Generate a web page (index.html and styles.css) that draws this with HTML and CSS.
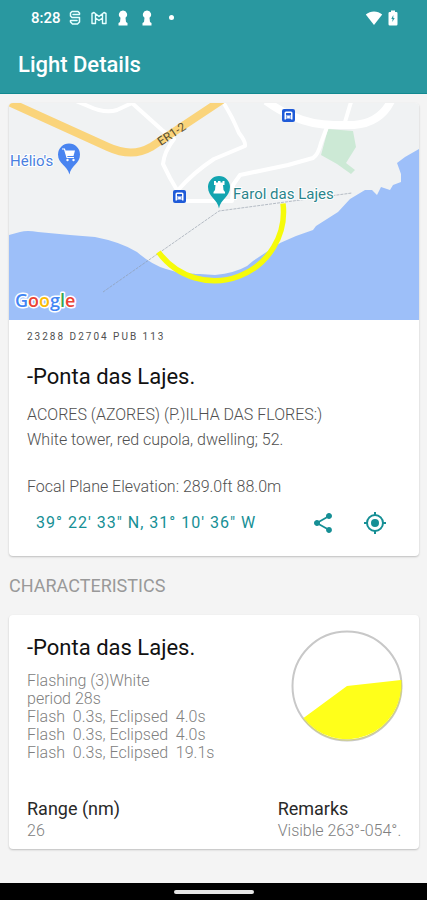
FILE: index.html
```html
<!DOCTYPE html>
<html lang="en">
<head>
<meta charset="utf-8">
<meta name="viewport" content="width=device-width, initial-scale=1">
<title>Light Details</title>
<link rel="stylesheet" href="styles.css">
</head>
<body>
<header class="top">
  <div class="status">
    <span class="clock">8:28</span>
    <svg class="s-icon" width="12" height="16" viewBox="0 0 12 16" fill="none" stroke="#e6ffff" stroke-width="1.500" stroke-linecap="round" stroke-linejoin="round"><path d="M10.500 4V3L9 1.500H3L1.500 3V6L3 7.500H10.500V12L8.500 14H3.500L1.500 12V10.500H8M4 4.500H10.500"/></svg>
    <svg class="m-icon" width="16" height="14" viewBox="0 0 16 14" fill="none" stroke="#e6ffff" stroke-width="1.400" stroke-linejoin="round"><path d="M1 2.500L3 1.500L8 5.500L13 1.500L15 2.500V12.500H11.500V7L8 9.500L4.500 7V12.500H1ZM4.500 7V3M11.500 7V3"/></svg>
    <svg class="pawn" width="10" height="16" viewBox="0 0 10 16" fill="#fff"><path d="M5 .5A4 4 0 0 1 7.500 7.700L8 12L9.500 13V15.500H.5V13L2 12L2.500 7.700A4 4 0 0 1 5 .5Z"/></svg>
    <svg class="pawn" width="10" height="16" viewBox="0 0 10 16" fill="#fff"><path d="M5 .5A4 4 0 0 1 7.500 7.700L8 12L9.500 13V15.500H.5V13L2 12L2.500 7.700A4 4 0 0 1 5 .5Z"/></svg>
    <span class="dot"></span>
    <svg class="wifi" width="18" height="16" viewBox="0 0 18 16" fill="#fff"><path d="M.8 4.500C5.500.4 12.500.4 17.200 4.500L9 15Z"/></svg>
    <svg class="battery" width="10" height="16" viewBox="0 0 10 16"><path fill="#fff" d="M3 .5H7V2H8.300Q9.500 2 9.500 3.200V14.300Q9.500 15.500 8.300 15.500H1.700Q.5 15.500.5 14.300V3.200Q.5 2 1.700 2H3Z"/><path fill="#2998a0" d="M5.300 5L3.300 9H4.600L4.300 12L6.700 8H5.300Z"/></svg>
  </div>
  <h1 class="title">Light Details</h1>
</header>

<main class="content">
  <section class="card">
    <svg class="map" viewBox="9 103 410 217" role="img" aria-label="Map">
      <rect x="9" y="103" width="410" height="217" fill="#f0f2f3"/>
      <path fill="#cce9d5" d="M328 129L353 131L356 147L346 163L355 170L351 174L337 164L321 155Z"/>
      <path fill="#9dbff9" d="M9 235L20 232Q27 230 38 232L70 235L95 237Q121 242 137 252Q152 265 166 269L180 273L200 274L215 275Q235 273 247 266L253 261L280 243L296 236L313 230L316 226L338 212L350 199L365 190L372 190L377 195L381 187L390 190L393 185L401 182L401 174L397 163L405 157L419 149V320H9Z"/>
      <path fill="#f0f2f3" d="M195 274Q228 274 249 263L284 238L270 220L190 230Z"/>
      <g fill="none" stroke="#fff" stroke-width="4" stroke-linejoin="round">
        <path d="M76 101L88 106Q105 114 117 110L132 103L162 130L174 139Q164 152 163 164L170 178L177 190"/>
        <path d="M178 190Q194 172 214 159Q226 154 245 146Q246 142 239 133Q232 116 223 102"/>
        <path d="M184 201H232L233 185L240 175L288 165L313 158Q318 155 321 143L327 127"/>
        <path d="M345 122L351 102"/>
      </g>
      <path fill="none" stroke="#fff" stroke-width="8" d="M266 101Q280 111 292 116Q312 125 334 125H354Q380 123 391 101"/>
      <path fill="none" stroke="#fad47b" stroke-width="8" d="M9 102L108 147Q132 158 151 147L222 100"/>
      <path fill="none" stroke="#8d97a5" stroke-width="1" stroke-dasharray="3 1" opacity=".6" d="M103 292L219 211L352 193"/>
      <path fill="none" stroke="#f6fb09" stroke-width="5.500" d="M158.500 252A69 69 0 0 0 283 203.500"/>
      <text class="road" transform="translate(161 146) rotate(-34)">ER1-2</text>
      <g id="bus"><rect x="173" y="190" width="13" height="13" rx="2" fill="#1f5bd8"/><path fill="#fff" d="M177 192.500H182Q183.500 192.500 183.500 194V200.500H182V199.500H177V200.500H175.500V194Q175.500 192.500 177 192.500Z"/><path fill="#1f5bd8" d="M177 194H182V196.500H177ZM177 197.500H178.200V198.500H177ZM180.800 197.500H182V198.500H180.800Z"/></g>
      <use href="#bus" x="109" y="-81"/>
      <path fill="#4984f0" d="M69 143.500A11 11 0 0 1 80 154.500C80 164 71 165 69.500 174.500C67 165 58 164 58 154.500A11 11 0 0 1 69 143.500Z"/>
      <path fill="none" stroke="#fff" stroke-width="1.200" d="M62 149H64.500L67 157.500H74"/><path fill="#fff" d="M65 150.500H75L73.500 156H66.500Z"/><circle cx="67.500" cy="160" r="1.200" fill="#fff"/><circle cx="73.500" cy="160" r="1.200" fill="#fff"/>
      <path fill="#12a4b0" d="M219 176A11 11 0 0 1 230 187C230 197 220.500 199 219 208.500C217.500 199 208 197 208 187A11 11 0 0 1 219 176Z"/>
      <path fill="#fff" d="M214 181H216V182.500H218V181H220.500V182.500H222.500V181H224.500V185H223L223.500 190L225 192V193.500H213.500V192L215 190L215.500 185H214Z"/>
      <text class="place helio" x="10" y="166">Hélio's</text>
      <text class="place farol" x="233" y="199">Farol das Lajes</text>
      <text class="google" x="15" y="307"><tspan fill="#4285f4">G</tspan><tspan fill="#ea4335">o</tspan><tspan fill="#fbbc05">o</tspan><tspan fill="#4285f4">g</tspan><tspan fill="#34a853">l</tspan><tspan fill="#ea4335">e</tspan></text>
    </svg>
    <div class="details">
      <p class="overline">23288 D2704 PUB 113</p>
      <h2 class="name">-Ponta das Lajes.</h2>
      <p class="region">ACORES (AZORES) (P.)ILHA DAS FLORES:)</p>
      <p class="desc">White tower, red cupola, dwelling; 52.</p>
      <p class="desc focal">Focal Plane Elevation: 289.0ft 88.0m</p>
    </div>
    <div class="actions">
      <button class="coords" type="button">39° 22' 33" N, 31° 10' 36" W</button>
      <button class="icon-btn" type="button" aria-label="Share"><svg width="24" height="24" viewBox="0 0 24 24" fill="#168f95"><path d="M18 16.080c-.76 0-1.440.3-1.960.77L8.910 12.700c.05-.23.09-.46.09-.7s-.04-.47-.09-.7l7.050-4.110c.54.5 1.250.81 2.040.81 1.660 0 3-1.340 3-3s-1.340-3-3-3-3 1.340-3 3c0 .24.04.47.09.7L8.040 9.810C7.500 9.310 6.790 9 6 9c-1.660 0-3 1.340-3 3s1.340 3 3 3c.79 0 1.500-.31 2.040-.81l7.120 4.160c-.05.21-.08.43-.08.65 0 1.610 1.310 2.920 2.920 2.920s2.920-1.310 2.920-2.920-1.310-2.920-2.920-2.920z"/></svg></button>
      <button class="icon-btn" type="button" aria-label="Show on map"><svg width="24" height="24" viewBox="0 0 24 24"><g fill="none" stroke="#168f95" stroke-width="2"><circle cx="12" cy="12" r="8"/><path d="M12 1V4M12 20V23M1 12H4M20 12H23"/></g><circle cx="12" cy="12" r="4" fill="#168f95"/></svg></button>
    </div>
  </section>

  <h2 class="section-title">CHARACTERISTICS</h2>

  <section class="card light">
    <div class="light-top">
      <div>
        <h3 class="name">-Ponta das Lajes.</h3>
        <p class="pattern">Flashing (3)White
period 28s
Flash  0.3s, Eclipsed  4.0s
Flash  0.3s, Eclipsed  4.0s
Flash  0.3s, Eclipsed  19.1s</p>
      </div>
      <svg class="sector" width="112" height="112" viewBox="0 0 112 112" role="img" aria-label="Visible sector"><circle cx="56" cy="56" r="54.500" fill="#fff" stroke="#c8c8c8" stroke-width="2"/><path fill="#ffff1a" d="M56 56L110 50A54.500 54.500 0 0 1 12.500 88Z"/><path fill="none" stroke="#d6d66a" stroke-width="1" d="M110.500 50A55 55 0 0 1 12 88.500"/></svg>
    </div>
    <dl class="facts">
      <div><dt>Range (nm)</dt><dd>26</dd></div>
      <div><dt>Remarks</dt><dd>Visible 263°-054°.</dd></div>
    </dl>
  </section>
</main>

<footer class="nav"><span class="handle"></span></footer>
</body>
</html>
```
FILE: styles.css
```css
* { box-sizing: border-box; }
body {
  margin: 0;
  min-height: 100vh;
  display: flex;
  flex-direction: column;
  background: #f4f4f4;
  font-family: Roboto, "Liberation Sans", sans-serif;
  color: #505050;
}
h1, h2, h3, p, dl, dd { margin: 0; font-weight: 400; }
button { border: 0; padding: 0; background: none; font: inherit; }

.top {
  background: #2998a0;
  border-bottom: 1px solid #128990;
  color: #fff;
}
.status {
  display: flex;
  align-items: center;
  height: 35px;
  padding: 0 29px 0 31px;
}
.clock { font-size: 15px; font-weight: 500; line-height: 20px; }
.s-icon { margin-left: 8px; }
.m-icon { margin-left: 10px; }
.pawn { margin-left: 11px; }
.pawn + .pawn { margin-left: 14px; }
.dot { width: 5px; height: 5px; margin-left: 17px; border-radius: 50%; background: #fff; }
.wifi { margin-left: auto; }
.battery { margin-left: 5px; }
.title {
  padding: 16px 18px 14px;
  font-size: 22px;
  font-weight: 500;
  line-height: 28px;
}

.content { flex: 1; padding: 9px 8px 0 9px; }
.card {
  overflow: hidden;
  background: #fff;
  border-radius: 4px;
  box-shadow: 0 1px 2px rgba(0, 0, 0, .22);
}
.map { display: block; width: 100%; height: auto; }
.road { font: 12px Roboto, sans-serif; fill: #5b5032; }
.place { font: 15px Roboto, sans-serif; stroke: #fff; stroke-width: 2px; paint-order: stroke; }
.helio { fill: #4a7fe0; }
.farol { fill: #2a858c; }
.google { font: 600 18px "Open Sans", sans-serif; stroke: #fff; stroke-width: 3px; stroke-linejoin: round; paint-order: stroke; }

.details { padding: 10px 18px 0; }
.overline { font-size: 10px; line-height: 14px; letter-spacing: 2px; }
.name { color: #111; font-size: 22px; line-height: 28px; }
.details .name { padding-top: 19px; }
.region { padding-top: 12px; font-size: 16px; font-weight: 300; line-height: 24px; }
.desc { font-size: 16px; font-weight: 300; line-height: 26px; }
.focal { padding-top: 21px; }
.actions { display: flex; align-items: center; padding: 0 20px 10px 27px; }
.coords { margin-right: auto; color: #168f95; font-size: 16px; line-height: 24px; letter-spacing: 1px; }
.icon-btn { display: flex; align-items: center; justify-content: center; width: 48px; height: 46px; }
.icon-btn + .icon-btn { margin-left: 4px; }

.section-title { padding: 18px 0 17px; color: #999; font-size: 18px; line-height: 24px; }

.light { padding: 15px 16px 8px 18px; }
.light-top { display: flex; justify-content: space-between; }
.light .name { padding-top: 4px; }
.pattern { padding-top: 10px; color: #808080; font-size: 16px; font-weight: 300; line-height: 18px; white-space: pre; }
.facts { display: grid; grid-template-columns: 2fr 1fr; padding-top: 35px; }
dt { color: #292929; font-size: 18px; line-height: 24px; }
dd { color: #808080; font-size: 16px; font-weight: 300; line-height: 20px; }

.nav { display: flex; align-items: center; justify-content: center; height: 17px; background: #000; }
.handle { width: 80px; height: 4px; border-radius: 2px; background: #e6e6e6; }
```
